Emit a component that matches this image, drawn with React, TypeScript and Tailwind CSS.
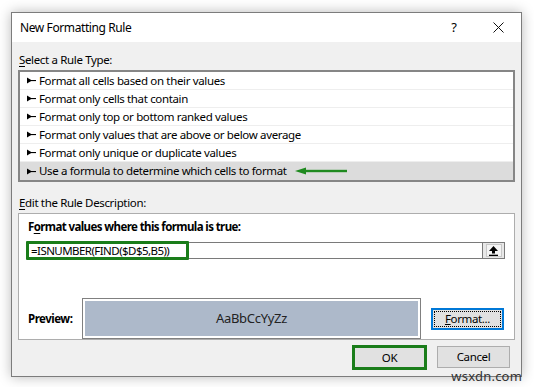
import React from "react";

const ruleTypes = [
  "Format all cells based on their values",
  "Format only cells that contain",
  "Format only top or bottom ranked values",
  "Format only values that are above or below average",
  "Format only unique or duplicate values",
  "Use a formula to determine which cells to format",
];

const Bullet = () => (
  <svg width="9" height="7" viewBox="0 0 9 7" className="shrink-0">
    <polygon points="0,0.5 5,3.5 0,6.5" fill="#000" />
    <rect x="0" y="3" width="9" height="1.1" fill="#000" />
  </svg>
);

const GreenArrow = () => (
  <svg width="52" height="8" viewBox="0 0 52 8" className="ml-[8px] shrink-0">
    <polygon points="0,4 11,0.5 11,7.5" fill="#1f8a1f" />
    <rect x="10" y="2.8" width="42" height="2.4" fill="#1f8a1f" />
  </svg>
);

export default function App() {
  return (
    <div
      className="w-[534px] h-[387px] bg-white relative overflow-hidden text-black"
      style={{ fontFamily: '"Noto Sans", "Open Sans", sans-serif' }}
    >
      <div className="ml-[11px] mt-[12px] w-[511px] h-[365px] border border-[#7c7c7c] bg-[#f0f0f0] shadow-[0_0_12px_rgba(0,0,0,0.28)] flex flex-col">
        {/* title bar */}
        <div className="h-[29px] bg-white flex items-center pl-[8px] pr-[17px]">
          <span className="text-[12px] tracking-[-0.4px]">New Formatting Rule</span>
          <span className="ml-auto text-[13px] mr-[36px]">?</span>
          <svg width="11" height="11" viewBox="0 0 11 11">
            <path d="M0.5 0.5 L10.5 10.5 M10.5 0.5 L0.5 10.5" stroke="#111" strokeWidth="1" />
          </svg>
        </div>

        <div className="px-[6px] flex flex-col text-[11.5px] tracking-[-0.35px]">
          <div className="mt-[10px] h-[16px] leading-[16px] pl-[1px]">
            <span className="underline underline-offset-2">S</span>elect a Rule Type:
          </div>
          <div className="mt-[2px] h-[112px] border-2 border-[#868686] bg-white flex flex-col">
            {ruleTypes.map((r, i) => (
              <div
                key={r}
                className={
                  i === ruleTypes.length - 1
                    ? "h-[18px] flex items-center pl-[7px] bg-[#dcdcdc]"
                    : "h-[18px] flex items-center pl-[7px] border-b border-[#eeeeee]"
                }
              >
                <Bullet />
                <span className="ml-[3px]">{r}</span>
                {i === ruleTypes.length - 1 && <GreenArrow />}
              </div>
            ))}
          </div>

          <div className="mt-[13px] h-[16px] leading-[16px] pl-[1px]">
            <span className="underline underline-offset-2">E</span>dit the Rule Description:
          </div>
          <div className="mt-[2px] h-[127px] border border-[#adadad] bg-white flex flex-col">
            <div className="mt-[5px] pl-[9px] font-bold text-[11.5px] tracking-[-0.6px] h-[16px] leading-[16px]">
              F<span className="underline underline-offset-2">o</span>rmat values where this formula is true:
            </div>
            <div className="mt-[7px] ml-[7px] mr-[9px] h-[17px] flex relative">
              <div className="flex-1 border border-[#7a7a7a] flex items-center pl-[4px] tracking-[-0.55px]">
                =ISNUMBER(FIND($D$5,B5))
              </div>
              <div className="w-[22px] border border-[#7a7a7a] border-l-0 bg-[#e8e8e8] flex items-center justify-center">
                <div className="w-[16px] h-[13px] border border-[#c8c8c8] bg-[#f4f4f4] flex items-center justify-center">
                  <svg width="9" height="10" viewBox="0 0 9 10">
                    <polygon points="4.5,0 9,5 6,5 6,7.5 3,7.5 3,5 0,5" fill="#000" />
                    <rect x="0" y="8.7" width="9" height="1.3" fill="#000" />
                  </svg>
                </div>
              </div>
              <div className="absolute left-0 top-[-1px] w-[163px] h-[19px] border-[3px] border-[#1a7d1a] rounded-[1px]" />
            </div>
            <div className="mt-[23px] mx-[2px] h-px bg-[#cfcfcf]" />
            <div className="mt-[16px] flex items-center pl-[9px]">
              <span className="font-bold w-[54px] tracking-[-0.5px]">Preview:</span>
              <div className="w-[339px] h-[41px] border border-[#808080] p-[2px] bg-white">
                <div className="w-full h-full bg-[#adb9ca] flex items-center justify-center text-[13px] tracking-[-0.3px] text-[#222]">
                  AaBbCcYyZz
                </div>
              </div>
              <div className="ml-[10px] w-[73px] h-[22px] border-2 border-[#0078d7] bg-[#e1e1e1] p-[1px]">
                <div className="w-full h-full border border-dotted border-[#000] flex items-center justify-center leading-[14px]">
                  <span>
                    <span className="underline underline-offset-1">F</span>ormat...
                  </span>
                </div>
              </div>
            </div>
          </div>

          <div className="mt-[5px] flex justify-end pr-[5px] gap-[10px]">
            <div className="w-[75px] h-[25px] border-[3px] border-[#1a7d1a] bg-[#e1e1e1] flex items-center justify-center">
              OK
            </div>
            <div className="w-[73px] h-[22px] mt-[1px] border border-[#adadad] bg-[#e1e1e1] flex items-center justify-center">
              Cancel
            </div>
          </div>
        </div>
      </div>
      <div className="absolute right-[12px] bottom-[1px] text-[13px] text-[#333] tracking-[0.2px]">
        wsxdn.com
      </div>
    </div>
  );
}
